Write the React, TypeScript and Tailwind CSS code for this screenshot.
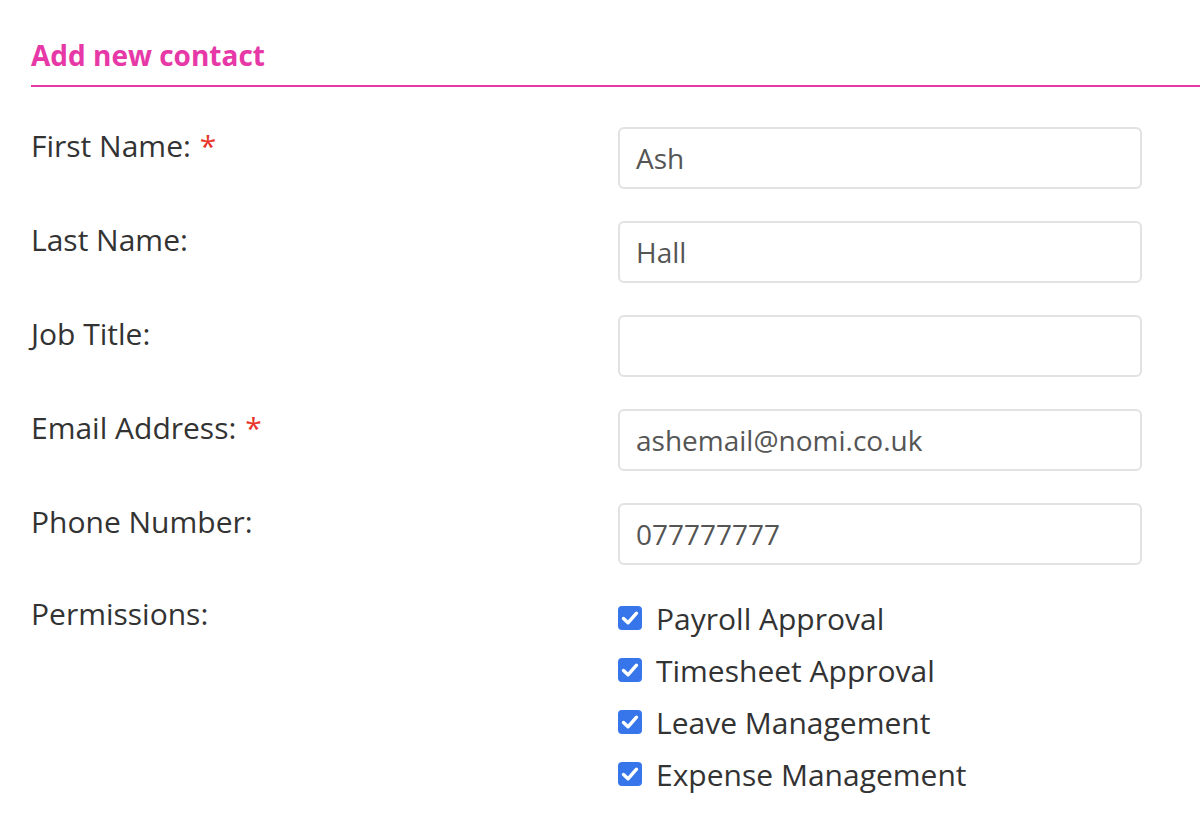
import React from "react";

const fields: { label: string; value: string; required?: boolean }[] = [
  { label: "First Name:", value: "Ash", required: true },
  { label: "Last Name:", value: "Hall" },
  { label: "Job Title:", value: "" },
  { label: "Email Address:", value: "ashemail@nomi.co.uk", required: true },
  { label: "Phone Number:", value: "077777777" },
];

const perms = ["Payroll Approval", "Timesheet Approval", "Leave Management", "Expense Management"];

function Check() {
  return (
    <span className="flex h-[24px] w-[24px] shrink-0 items-center justify-center rounded-[4px] bg-[#3676ea]">
      <svg width="24" height="24" viewBox="0 0 24 24">
        <path d="M5.5 12.5 L10 16.8 L18.5 7.2" fill="none" stroke="#fff" strokeWidth="3.4" strokeLinecap="round" strokeLinejoin="round" />
      </svg>
    </span>
  );
}

export default function App() {
  return (
    <div className="h-[818px] w-[1200px] overflow-hidden bg-white pl-[31px] font-['Open_Sans',sans-serif]">
      <div className="border-b-2 border-[#e638a6] pt-[37px] pb-[12px]">
        <h1 className="text-[28px] font-bold leading-[36px] text-[#e638a6]">Add new contact</h1>
      </div>
      <div className="mt-[40px] flex flex-col gap-[32px]">
        {fields.map((f) => (
          <div key={f.label} className="flex items-start">
            <div className="w-[587px] text-[30px] leading-[38px] text-[#333]">
              {f.label}
              {f.required && <span className="ml-[9px] text-[#e8352a]">*</span>}
            </div>
            <div className="flex h-[62px] w-[524px] items-center rounded-[6px] border-2 border-[#e2e2e2] pl-[16px] text-[28px] text-[#555]">
              {f.value}
            </div>
          </div>
        ))}
        <div className="-mt-[2px] flex items-start">
          <div className="w-[587px] text-[30px] leading-[38px] text-[#333]">Permissions:</div>
          <div className="-mt-[3px] flex flex-col">
            {perms.map((p) => (
              <div key={p} className="flex h-[52px] items-center gap-[14px]">
                <Check />
                <span className="text-[30px] text-[#333]">{p}</span>
              </div>
            ))}
          </div>
        </div>
      </div>
    </div>
  );
}
